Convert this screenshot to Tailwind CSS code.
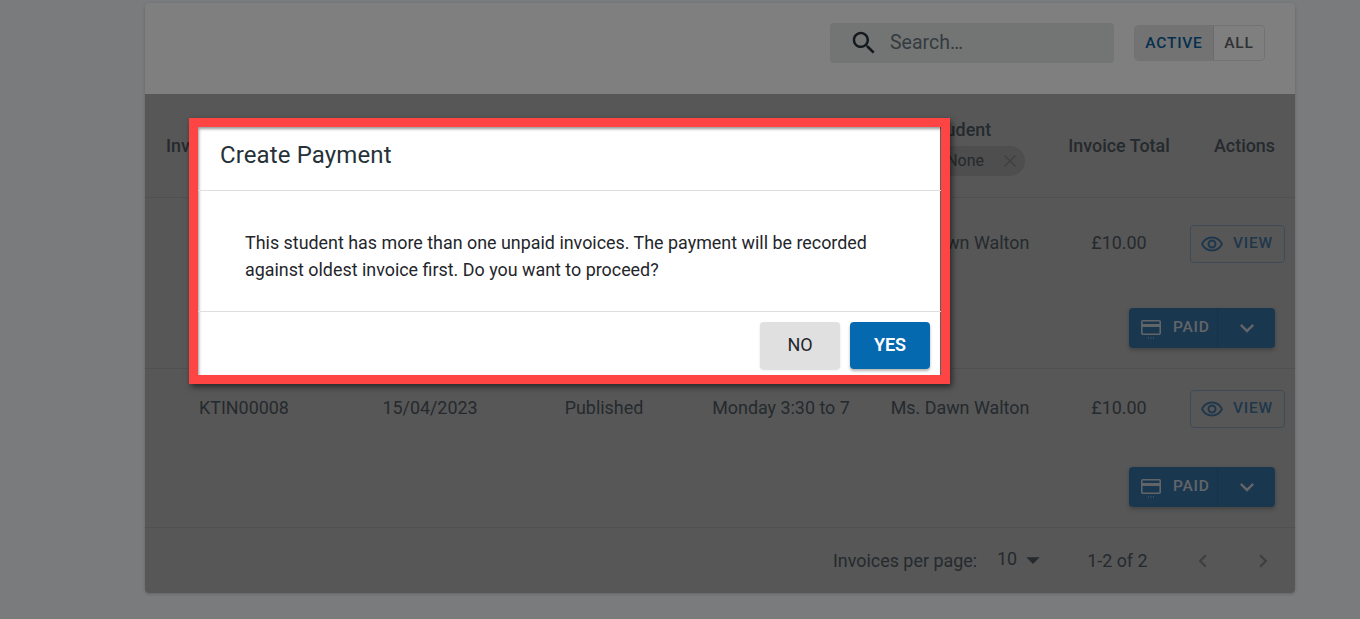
<!DOCTYPE html>
<html lang="en">
<head>
    <meta charset="UTF-8">
    <meta name="viewport" content="width=device-width, initial-scale=1.0">
    <title>Invoices</title>
    <script src="https://cdn.jsdelivr.net/npm/@tailwindcss/browser@4"></script>
</head>
<body class="relative h-[619px] overflow-hidden bg-[#f4f6fa] font-['Roboto',sans-serif] text-[#263238]">
    <!-- Invoice card -->
    <div class="ml-[145px] mt-[3px] flex h-[590px] w-[1150px] flex-col overflow-hidden rounded bg-white shadow-[0_1px_3px_rgba(0,0,0,0.2)]">
        <!-- Toolbar -->
        <div class="flex h-[91px] shrink-0 items-start pl-[685px] pt-[20px]">
            <div class="flex h-[40px] w-[284px] items-center rounded bg-[#e5ebe8] pl-[19px]">
                <svg class="h-[30px] w-[30px] text-[#263238]" viewBox="0 0 24 24" fill="currentColor"><path d="M15.5 14h-.79l-.28-.27C15.41 12.59 16 11.11 16 9.5 16 5.91 13.09 3 9.5 3S3 5.91 3 9.5 5.91 16 9.5 16c1.61 0 3.09-.59 4.23-1.57l.27.28v.79l5 4.99L20.49 19l-4.99-5zm-6 0C7.01 14 5 11.99 5 9.5S7.01 5 9.5 5 14 7.01 14 9.5 11.99 14 9.5 14z"/></svg>
                <span class="ml-[11px] text-[19.5px] text-[#6b7780]">Search…</span>
            </div>
            <div class="ml-[20px] mt-[2px] flex h-[36px] w-[131px] overflow-hidden rounded border border-[#e2e6e6] text-[15.5px] font-medium tracking-[0.05em]">
                <div class="flex w-[79px] items-center justify-center border-r border-[#d5d8d8] bg-[#e6e6e6] pt-[1px] text-[#0a5f9e]">ACTIVE</div>
                <div class="flex flex-1 items-center justify-center pt-[1px] text-[#5f6368]">ALL</div>
            </div>
        </div>

        <!-- Table -->
        <div class="flex flex-1 flex-col bg-[#aeaeae] text-[17.9px] text-[#4a545c]">
            <div class="grid h-[104px] shrink-0 grid-cols-[198px_174px_174px_180px_178px_140px_106px] items-center border-b border-[#a0a0a0] text-center font-medium">
                <div class="pl-[21px] pt-[2px] text-left">Invoice No</div>
                <div></div>
                <div></div>
                <div></div>
                <div class="flex flex-col items-center">
                    <span class="h-[24px] mt-[1px]">Student</span>
                    <span class="mt-[5px] flex h-[30px] w-[130px] items-center justify-end rounded-full bg-[#9c9c9c] pr-[5px] text-[16px] font-normal text-[#4b5358]">
                        <span class="mt-[1px]">None</span>
                        <svg class="ml-[16px] h-[20px] w-[20px]" viewBox="0 0 20 20" fill="none" stroke="#808080" stroke-width="1.5"><path d="M4.5 4.5l11 11M15.5 4.5l-11 11"/></svg>
                    </span>
                </div>
                <div class="pt-[2px]">Invoice Total</div>
                <div class="pl-[5px] pt-[2px]">Actions</div>
            </div>

            <!-- Row 1 -->
            <div class="grid h-[171px] shrink-0 grid-cols-[198px_174px_174px_180px_178px_140px_106px] grid-rows-[91px_1fr] border-b border-[#a0a0a0] text-center">
                <div></div>
                <div></div>
                <div></div>
                <div></div>
                <div class="self-center pb-[1px]">Ms. Dawn Walton</div>
                <div class="self-center pb-[1px]">£10.00</div>
                <div class="flex items-center">
                    <button class="ml-px flex h-[38px] w-[95px] items-center gap-[9px] rounded border border-[#7d97ad] pl-[9px] text-[15.5px] font-medium tracking-[0.05em] text-[#3f6f96]">
                        <svg class="h-[24px] w-[24px]" viewBox="0 0 24 24" fill="currentColor"><path d="M12 6.5c3.79 0 7.17 2.13 8.82 5.5-1.65 3.37-5.02 5.5-8.82 5.5S4.83 15.37 3.18 12C4.83 8.63 8.21 6.5 12 6.5m0-2C7 4.5 2.73 7.61 1 12c1.73 4.39 6 7.5 11 7.5s9.27-3.11 11-7.5c-1.73-4.39-6-7.5-11-7.5zm0 5c1.38 0 2.5 1.12 2.5 2.5s-1.12 2.5-2.5 2.5-2.5-1.12-2.5-2.5 1.12-2.5 2.5-2.5m0-2c-2.48 0-4.5 2.02-4.5 4.5s2.02 4.5 4.5 4.5 4.5-2.02 4.5-4.5-2.02-4.5-4.5-4.5z"/></svg>
                        VIEW
                    </button>
                </div>
                <div class="col-span-7 flex items-start justify-end pr-[20px] pt-[19px]">
                    <div class="flex h-[40px] w-[146px] overflow-hidden rounded bg-[#346ea0] text-[15.5px] font-medium tracking-[0.05em] text-[#c4cad0] shadow-[0_2px_4px_rgba(0,0,0,0.25)]">
                        <div class="flex w-[89px] items-center gap-[11px] border-r border-[#2f6693] pl-[11px]">
                            <svg class="h-[24px] w-[22px]" viewBox="0 0 22 24" fill="none" stroke="currentColor" stroke-width="1.6"><rect x="1.8" y="4.8" width="18.4" height="13.4" rx="1"/><path d="M1.8 9.5h18.4" stroke-width="3"/><path d="M8 22h1M10.5 22h1M13 22h1" stroke-width="1.2"/></svg>
                            PAID
                        </div>
                        <div class="flex flex-1 items-center justify-center">
                            <svg class="h-[28px] w-[28px]" viewBox="0 0 24 24" fill="currentColor"><path d="M16.59 8.59 12 13.17 7.41 8.59 6 10l6 6 6-6z"/></svg>
                        </div>
                    </div>
                </div>
            </div>

            <!-- Row 2 -->
            <div class="grid h-[159px] shrink-0 grid-cols-[198px_174px_174px_180px_178px_140px_106px] grid-rows-[79px_1fr] border-b border-[#a0a0a0] text-center">
                <div class="self-center pb-[1px]">KTIN00008</div>
                <div class="self-center pb-[1px]">15/04/2023</div>
                <div class="self-center pb-[1px]">Published</div>
                <div class="self-center pb-[1px]">Monday 3:30 to 7</div>
                <div class="self-center pb-[1px]">Ms. Dawn Walton</div>
                <div class="self-center pb-[1px]">£10.00</div>
                <div class="flex items-center">
                    <button class="ml-px flex h-[38px] w-[95px] items-center gap-[9px] rounded border border-[#7d97ad] pl-[9px] text-[15.5px] font-medium tracking-[0.05em] text-[#3f6f96]">
                        <svg class="h-[24px] w-[24px]" viewBox="0 0 24 24" fill="currentColor"><path d="M12 6.5c3.79 0 7.17 2.13 8.82 5.5-1.65 3.37-5.02 5.5-8.82 5.5S4.83 15.37 3.18 12C4.83 8.63 8.21 6.5 12 6.5m0-2C7 4.5 2.73 7.61 1 12c1.73 4.39 6 7.5 11 7.5s9.27-3.11 11-7.5c-1.73-4.39-6-7.5-11-7.5zm0 5c1.38 0 2.5 1.12 2.5 2.5s-1.12 2.5-2.5 2.5-2.5-1.12-2.5-2.5 1.12-2.5 2.5-2.5m0-2c-2.48 0-4.5 2.02-4.5 4.5s2.02 4.5 4.5 4.5 4.5-2.02 4.5-4.5-2.02-4.5-4.5-4.5z"/></svg>
                        VIEW
                    </button>
                </div>
                <div class="col-span-7 flex items-start justify-end pr-[20px] pt-[19px]">
                    <div class="flex h-[40px] w-[146px] overflow-hidden rounded bg-[#346ea0] text-[15.5px] font-medium tracking-[0.05em] text-[#c4cad0] shadow-[0_2px_4px_rgba(0,0,0,0.25)]">
                        <div class="flex w-[89px] items-center gap-[11px] border-r border-[#2f6693] pl-[11px]">
                            <svg class="h-[24px] w-[22px]" viewBox="0 0 22 24" fill="none" stroke="currentColor" stroke-width="1.6"><rect x="1.8" y="4.8" width="18.4" height="13.4" rx="1"/><path d="M1.8 9.5h18.4" stroke-width="3"/><path d="M8 22h1M10.5 22h1M13 22h1" stroke-width="1.2"/></svg>
                            PAID
                        </div>
                        <div class="flex flex-1 items-center justify-center">
                            <svg class="h-[28px] w-[28px]" viewBox="0 0 24 24" fill="currentColor"><path d="M16.59 8.59 12 13.17 7.41 8.59 6 10l6 6 6-6z"/></svg>
                        </div>
                    </div>
                </div>
            </div>

            <!-- Pagination -->
            <div class="flex flex-1 items-center pl-[688px] text-[#4a545c]">
                <span class="mt-[2px]">Invoices per page:</span>
                <span class="ml-[20px] -mt-[2px]">10</span>
                <svg class="-mt-[1px] h-[32px] w-[32px] text-[#4a545c]" viewBox="0 0 24 24" fill="currentColor"><path d="M7 10l5 5 5-5z"/></svg>
                <span class="ml-[38px] mt-[2px]">1-2 of 2</span>
                <svg class="ml-[42px] h-[26px] w-[26px] text-[#7e7e7e]" viewBox="0 0 24 24" fill="currentColor"><path d="M15.41 7.41 14 6l-6 6 6 6 1.41-1.41L10.83 12z"/></svg>
                <svg class="ml-[34px] h-[26px] w-[26px] text-[#7e7e7e]" viewBox="0 0 24 24" fill="currentColor"><path d="M10 6 8.59 7.41 13.17 12l-4.58 4.59L10 18l6-6z"/></svg>
            </div>
        </div>
    </div>

    <!-- Backdrop -->
    <div class="absolute inset-0 bg-black/50"></div>

    <!-- Dialog with highlight frame -->
    <div class="absolute left-[189px] top-[118px] flex h-[266px] w-[761px] flex-col border-[9px] border-[#ff4444] bg-white shadow-[2px_3px_6px_rgba(0,0,0,0.55),inset_1px_2px_3px_rgba(0,0,0,0.4),inset_-1px_0_0_rgba(0,0,0,0.6)]">
        <div class="flex h-[64px] shrink-0 items-start border-b border-[#dedede] pl-[22px] pt-[12px] text-[24px] leading-[32px] tracking-[0.005em] text-[#263238]">Create Payment</div>
        <div class="flex h-[121px] shrink-0 flex-col justify-center border-b border-[#dedede] pl-[47px] pt-[9px] text-[17.9px] leading-[27px] text-[#1f262b]">
            <p>This student has more than one unpaid invoices. The payment will be recorded</p>
            <p>against oldest invoice first. Do you want to proceed?</p>
        </div>
        <div class="flex flex-1 items-start justify-end gap-[10px] pr-[11px] pt-[10px]">
            <button class="h-[47px] w-[80px] rounded bg-[#e0e0e0] pb-[2px] text-[18px] font-normal text-[#1f262b] shadow-[0_1px_2px_rgba(0,0,0,0.15)]">NO</button>
            <button class="h-[47px] w-[80px] rounded bg-[#0569b0] pb-[2px] text-[18px] font-semibold text-white shadow-[0_2px_3px_rgba(0,0,0,0.3)]">YES</button>
        </div>
    </div>
</body>
</html>
